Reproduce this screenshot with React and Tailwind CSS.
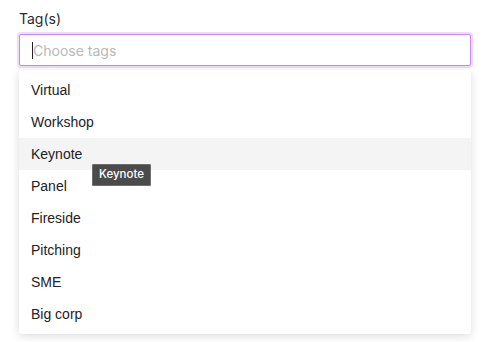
import React from 'react';

const tags = ['Virtual', 'Workshop', 'Keynote', 'Panel', 'Fireside', 'Pitching', 'SME', 'Big corp'];

export default function App() {
  return (
    <div className="w-[483px] h-[342px] bg-white overflow-hidden font-['Liberation_Sans',Arial,sans-serif]">
      <div className="pl-[19px] pr-[12px] pt-[10px]">
        <label className="block text-[14px] leading-[18px] text-[#2b2b2b] mb-[6px] font-['Inter',sans-serif]">Tag(s)</label>

        <div className="h-[32px] rounded-[2px] border border-[#c58af9] ring-[2px] ring-[#efdcfd] bg-white flex items-center pl-[12px]">
          <span className="w-px h-[17px] bg-[#222]" />
          <span className="text-[14px] text-[#b9b9b9] font-['Inter',sans-serif]">Choose tags</span>
        </div>

        <div className="relative mt-[4px] bg-white rounded-[3px] shadow-[0_2px_10px_rgba(0,0,0,0.14)] py-[4px]">
          {tags.map(t => (
            <div
              key={t}
              className={
                'h-[32px] flex items-center pl-[12px] text-[14px] text-[#222] ' +
                (t === 'Keynote' ? 'bg-[#f4f4f4]' : '')
              }
            >
              {t}
            </div>
          ))}
          <div className="absolute left-[73px] top-[94px] h-[22px] px-[6px] flex items-center bg-[#4b4b4b] border border-[#6e6e6e] text-white text-[11.5px] font-medium rounded-[1px] font-['Inter',sans-serif]">
            Keynote
          </div>
        </div>
      </div>
    </div>
  );
}
